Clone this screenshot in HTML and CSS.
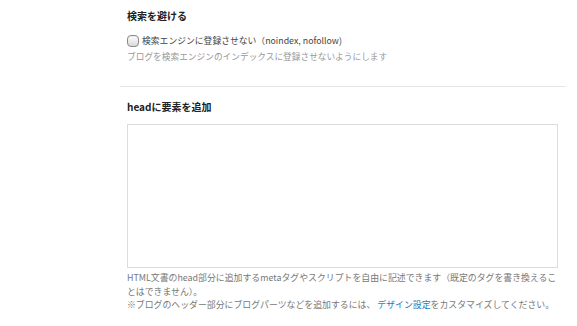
FILE: index.html
```html
<!DOCTYPE html>
<html lang="ja">

<head>
    <meta charset="UTF-8">
    <meta name="viewport" content="width=device-width, initial-scale=1.0">
    <title>詳細設定</title>
    <link rel="stylesheet" href="styles.css">
</head>

<body>
    <div class="container">
        <div class="section">
            <h3>検索を避ける</h3>
            <label class="check">
                <span class="box"></span>
                検索エンジンに登録させない（noindex, nofollow)
            </label>
            <p class="note">ブログを検索エンジンのインデックスに登録させないようにします</p>
        </div>
        <div class="section head">
            <h3>headに要素を追加</h3>
            <textarea></textarea>
            <p class="help">HTML文書のhead部分に追加するmetaタグやスクリプトを自由に記述できます（既定のタグを書き換えることはできません）。<br>※ブログのヘッダー部分にブログパーツなどを追加するには、 <a href="#">デザイン設定</a>をカスタマイズしてください。</p>
        </div>
    </div>
</body>

</html>
```

FILE: styles.css
```css
body {
    margin: 0;
    background-color: white;
    font-family: "Noto Sans CJK JP", "Noto Sans", sans-serif;
    color: #333;
}

.container {
    margin-left: 120px;
    width: 446px;
}

.section {
    padding: 0 8px 0 7px;
}

.section:nth-child(1) {
    padding-top: 9px;
    padding-bottom: 23px;
    border-bottom: 1px solid #e6e8e8;
}

h3 {
    margin: 0;
    font-size: 10px;
    line-height: 14px;
    font-weight: bold;
    color: #222;
}

.check {
    margin-top: 11px;
    display: flex;
    align-items: center;
    font-size: 8.8px;
    line-height: 13px;
    color: #444;
}

.box {
    width: 10px;
    height: 10px;
    margin-right: 3px;
    border: 1px solid #8a8a8a;
    border-radius: 4px;
    background: linear-gradient(#ffffff, #d8d8d8);
    box-shadow: inset 0 1px 1px rgba(0, 0, 0, 0.08);
}

.note {
    margin: 3px 0 0;
    font-size: 8.7px;
    line-height: 13px;
    color: #999;
}

.head {
    padding-top: 13px;
}

.head textarea {
    display: block;
    box-sizing: border-box;
    width: 100%;
    height: 144px;
    margin-top: 10px;
    border: 1px solid #dcdcdc;
    resize: none;
}

.help {
    margin: 3px 0 0;
    font-size: 8.9px;
    line-height: 13.5px;
    color: #777;
}

.help a {
    color: #2a7ac0;
    text-decoration: none;
}
```
